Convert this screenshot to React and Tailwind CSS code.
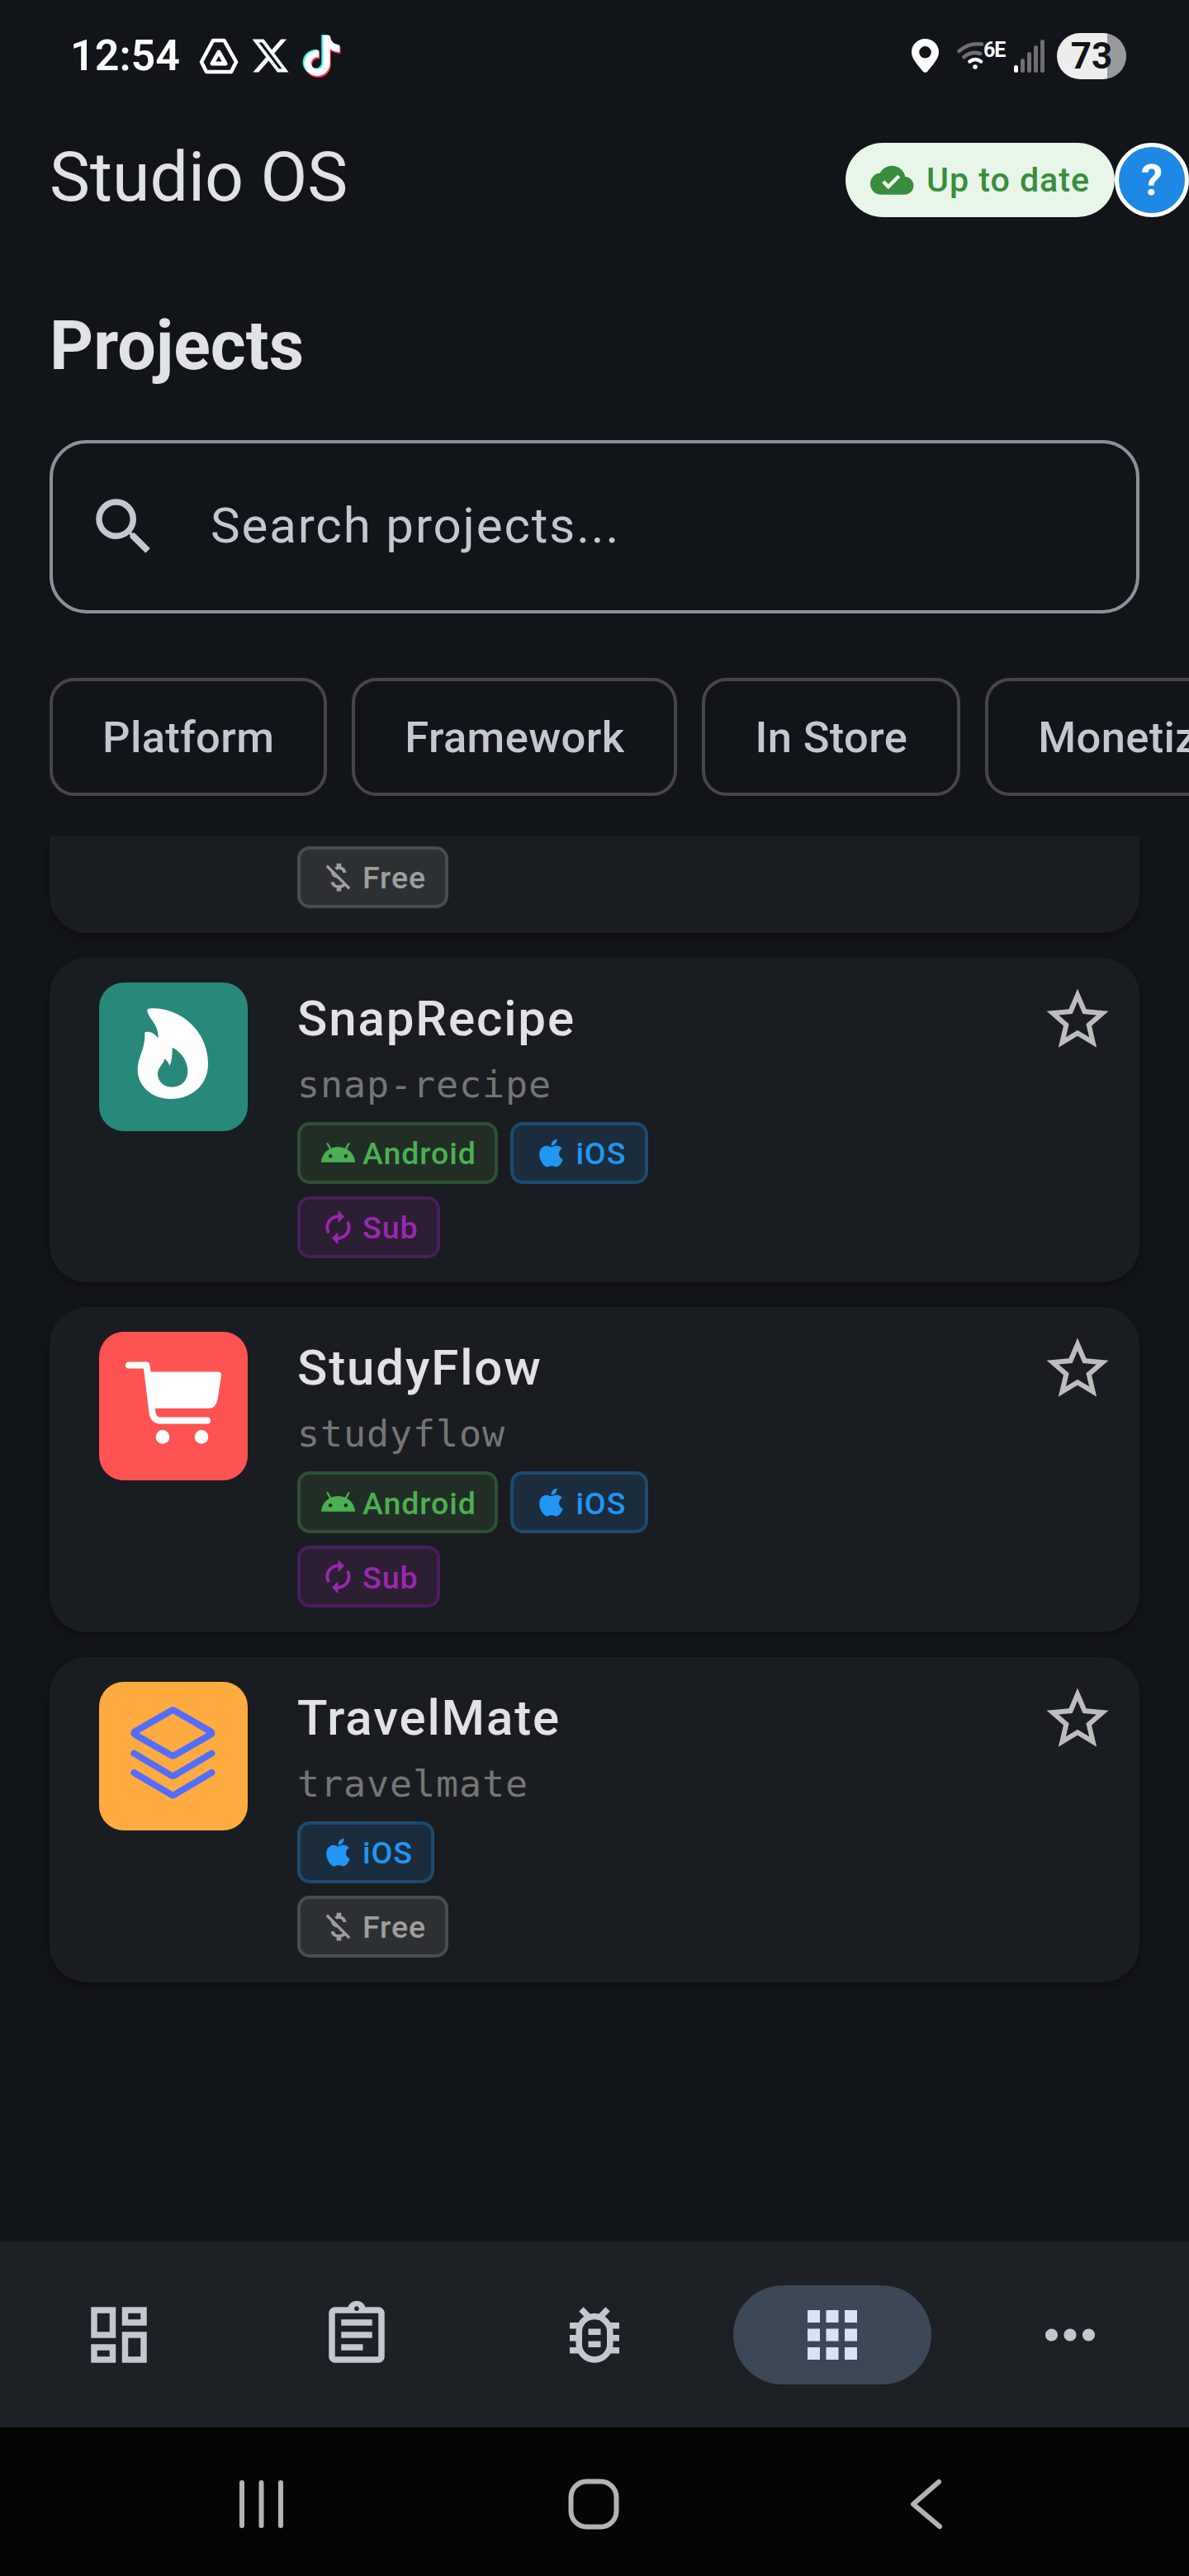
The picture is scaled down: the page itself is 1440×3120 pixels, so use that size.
import {
  MdOutlineDashboard,
  MdOutlineAssignment,
  MdOutlineBugReport,
  MdApps,
  MdMoreHoriz,
  MdSearch,
  MdCloudDone,
  MdStarBorder,
  MdAndroid,
  MdAutorenew,
  MdMoneyOff,
} from "react-icons/md";
import { FaXTwitter, FaTiktok } from "react-icons/fa6";

const FILTERS = ["Platform", "Framework", "In Store", "Monetization"];

const PROJECTS = [
  { name: "SnapRecipe", slug: "snap-recipe", icon: FlameIcon, tile: "bg-[#28887b]", platforms: ["android", "ios"], pricing: "sub" },
  { name: "StudyFlow", slug: "studyflow", icon: CartIcon, tile: "bg-[#ff5252]", platforms: ["android", "ios"], pricing: "sub" },
  { name: "TravelMate", slug: "travelmate", icon: LayersIcon, tile: "bg-[#ffab40]", platforms: ["ios"], pricing: "free" },
];

const BADGES = {
  android: { label: "Android", icon: MdAndroid, style: "bg-[#202e26] border-[#2c5132] text-[#4caf50]" },
  ios: { label: "iOS", icon: AppleIcon, style: "bg-[#1b2c3c] border-[#1c4a70] text-[#2196f3]" },
  sub: { label: "Sub", icon: MdAutorenew, style: "bg-[#2c1e33] border-[#49205a] text-[#9c27b0]" },
  free: { label: "Free", icon: MdMoneyOff, style: "bg-[#2d3032] border-[#4a4d4f] text-[#9e9e9e]" },
};

const TABS = [
  { id: "dashboard", icon: MdOutlineDashboard },
  { id: "tasks", icon: MdOutlineAssignment },
  { id: "bugs", icon: MdOutlineBugReport },
  { id: "projects", icon: MdApps, active: true },
  { id: "more", icon: MdMoreHoriz },
];

function AppleIcon({ className }) {
  return (
    <svg className={className} viewBox="0 0 24 24" fill="currentColor">
      <path d="M17.05 20.28c-.98.95-2.05.8-3.08.35-1.09-.46-2.09-.48-3.24 0-1.44.62-2.2.44-3.06-.35C2.79 15.25 3.51 7.59 9.05 7.31c1.35.07 2.29.74 3.08.8 1.18-.24 2.31-.93 3.57-.84 1.51.12 2.65.72 3.4 1.8-3.12 1.87-2.38 5.98.48 7.13-.57 1.5-1.31 2.99-2.53 4.08zM12.03 7.25c-.15-2.23 1.66-4.07 3.74-4.25.29 2.58-2.34 4.5-3.74 4.25z" />
    </svg>
  );
}

function FlameIcon() {
  return (
    <svg className="h-[180px] w-[180px]" viewBox="2 4 540 540">
      <path
        fill="#fff"
        fillRule="evenodd"
        d="M178 113C174 102 180 98 192 98C262 96 322 132 357 177C386 215 398 260 398 300C398 372 342 427 262 427C192 427 142 380 142 320C142 275 171 245 168 188Q168 183 173 183C191 182 206 190 216 206C222 165 188 140 178 113ZM268 240C300 256 324 290 324 325C324 362 300 384 266 384C236 384 215 362 215 337C215 312 236 302 240 281C250 289 254 296 258 306C266 294 268 268 268 240Z"
      />
    </svg>
  );
}

function CartIcon() {
  return (
    <svg className="h-[180px] w-[180px]" viewBox="0 0 180 180" fill="#fff">
      <path d="M36 40.500H57.500L64.500 98Q66 107.500 74 107.500H131" fill="none" stroke="#fff" strokeWidth="8" strokeLinecap="round" strokeLinejoin="round" />
      <path d="M59 48.500H144Q148.600 48.500 148 53L143.500 82Q141.500 92.700 133 92.700H64Z" />
      <circle cx="77" cy="127.400" r="8.300" />
      <circle cx="124" cy="127.400" r="8.300" />
    </svg>
  );
}

function LayersIcon() {
  return (
    <svg className="h-[180px] w-[180px]" viewBox="2 3 540 540" fill="none" stroke="#536dfe" strokeWidth="24" strokeLinejoin="round" strokeLinecap="round">
      <path d="M264 108Q270 104 276 108L408 184Q415 189 408 194L276 270Q270 274 264 270L132 194Q125 189 132 184Z" />
      <path d="M129 263L264 343Q270 347 276 343L411 263" />
      <path d="M129 333L264 413Q270 417 276 413L411 333" />
    </svg>
  );
}

function StatusBar() {
  return (
    <div className="flex h-[135px] shrink-0 items-center pl-[85px] pr-[76px]">
      <span className="w-[156px] text-[52px] font-semibold leading-none text-white">12:54</span>
      <svg className="h-[44px] w-[48px]" viewBox="0 0 48 44" fill="none" stroke="#fff" strokeLinejoin="round">
        <path strokeWidth="4.500" d="M17 3h13.500L45 29l-6 12H9L3 29Z" />
        <path strokeWidth="5" d="M24 17l-8 14h16Z" />
      </svg>
      <FaXTwitter className="ml-[14px] h-[49px] w-[49px] text-white" />
      <div className="relative ml-[14px] h-[52px] w-[48px]">
        <FaTiktok className="absolute left-0 top-0 h-[49px] w-[44px] text-[#25f4ee]" />
        <FaTiktok className="absolute left-[3px] top-[3px] h-[49px] w-[44px] text-[#fe2c55]" />
        <FaTiktok className="absolute left-[1.5px] top-[1.5px] h-[49px] w-[44px] text-white" />
      </div>
      <svg className="ml-auto h-[41px] w-[33px]" viewBox="0 0 33 41">
        <path fill="#fff" fillRule="evenodd" d="M16.500 0C7.400 0 0 7 0 16.200C0 24 7 31 13.500 39.300Q16.500 42.500 19.500 39.300C26 31 33 24 33 16.200C33 7 25.600 0 16.500 0ZM16.500 9a7.300 7.300 0 1 1 0 14.600a7.300 7.300 0 0 1 0-14.600Z" />
      </svg>
      <div className="ml-[22px] flex w-[57px]">
        <svg className="h-[40px] w-[32px] shrink-0" viewBox="0 0 32 40" fill="none" strokeWidth="4.500" strokeLinecap="round">
          <path stroke="#6d6f72" d="M2.500 14Q14 3.500 30 5.500M8.500 21Q17 13.500 28 17" />
          <path stroke="#fff" d="M15.500 26.500Q22 21.500 29 26.500" />
          <circle cx="22" cy="33" r="2.800" fill="#fff" />
        </svg>
        <span className="text-[25px] font-bold leading-[25px] tracking-[-1px] text-white">6E</span>
      </div>
      <div className="ml-[12px] flex h-[40px] items-end gap-[3px]">
        <span className="h-[9px] w-[5px] rounded-full bg-white" />
        <span className="h-[17px] w-[5px] rounded-full bg-[#6d6f72]" />
        <span className="h-[25px] w-[5px] rounded-full bg-[#6d6f72]" />
        <span className="h-[33px] w-[5px] rounded-full bg-[#6d6f72]" />
        <span className="h-[40px] w-[5px] rounded-full bg-[#6d6f72]" />
      </div>
      <div className="ml-[15px] flex h-[56px] w-[84px] items-center justify-center rounded-full bg-linear-to-r from-[#ededed] from-[73%] to-[#98999b] to-[73%]">
        <span className="text-[44px] font-bold leading-none text-[#111418]">73</span>
      </div>
    </div>
  );
}

function Header() {
  return (
    <header className="flex h-[166px] shrink-0 items-center pl-[60px]">
      <h1 className="pb-[7px] text-[82.5px] leading-[97px] text-[#e1e2e8]">Studio OS</h1>
      <div className="ml-auto flex h-[90px] items-center gap-[15px] rounded-full bg-[#e8f5e9] px-[30px] text-[#388e3c]">
        <MdCloudDone className="h-[52.5px] w-[52.5px]" />
        <span className="pt-[2px] text-[41.250px] font-medium leading-none tracking-[0.938px]">Up to date</span>
      </div>
      <button className="flex h-[90px] w-[90px] items-center justify-center rounded-full border-[5px] border-white bg-[#1e88e5] text-[52.5px] font-bold leading-none text-white">
        ?
      </button>
    </header>
  );
}

function Badge({ type }) {
  const { label, icon: Icon, style } = BADGES[type];
  return (
    <span className={`flex h-[75px] items-center gap-[7.5px] rounded-[15px] border-4 px-[22.5px] ${style}`}>
      <Icon className="h-[45px] w-[45px]" />
      <span className="pt-[3px] text-[37.5px] font-medium leading-none tracking-[0.938px]">{label}</span>
    </span>
  );
}

function ProjectCard({ project }) {
  const { name, slug, icon: Icon, tile, platforms, pricing } = project;
  return (
    <article className="flex h-[393.750px] items-start rounded-[45px] bg-[#191c20] py-[30px] pl-[60px] pr-[30px] shadow-[0_4px_8px_rgba(0,0,0,0.3)]">
      <div className={`flex h-[180px] w-[180px] shrink-0 items-center justify-center rounded-[30px] ${tile}`}>
        <Icon />
      </div>
      <div className="ml-[60px] flex flex-1 flex-col">
        <h3 className="h-[90px] text-[60px] font-medium leading-[88px] tracking-[1.875px] text-[#e1e2e8]">{name}</h3>
        <p className="h-[79px] font-['Droid_Sans_Mono','DejaVu_Sans_Mono',monospace] text-[45px] leading-[68px] tracking-[0.9px] text-[#757575]">{slug}</p>
        <div className="flex gap-[15px]">
          {platforms.map((p) => (
            <Badge key={p} type={p} />
          ))}
        </div>
        <div className="mt-[15px] flex">
          <Badge type={pricing} />
        </div>
      </div>
      <MdStarBorder className="h-[90px] w-[90px] shrink-0 text-[#bdbdbd]" />
    </article>
  );
}

function TabBar() {
  return (
    <nav className="flex h-[225px] shrink-0 items-center bg-[#1d2024]">
      {TABS.map(({ id, icon: Icon, active }) => (
        <div key={id} className="flex flex-1 justify-center">
          <div className={`flex h-[120px] w-[240px] items-center justify-center rounded-full ${active ? "bg-[#3c4858] text-[#d7e3f8]" : "text-[#c4c6d0]"}`}>
            <Icon className="h-[90px] w-[90px]" />
          </div>
        </div>
      ))}
    </nav>
  );
}

function SystemBar() {
  return (
    <div className="flex h-[180px] shrink-0 items-center bg-[#050505] pl-[286px] pr-[290px] pt-[5px]">
      <svg className="h-[62px] w-[62px]" viewBox="0 0 62 62" stroke="#b3b3b3" strokeWidth="6" strokeLinecap="round">
        <path d="M7 5v52M30.500 5v52M54 5v52" />
      </svg>
      <svg className="ml-[340px] h-[62px] w-[62px]" viewBox="0 0 62 62" fill="none" stroke="#b3b3b3" strokeWidth="6">
        <rect x="3.500" y="3.500" width="55" height="55" rx="19" />
      </svg>
      <svg className="ml-auto h-[62px] w-[48px]" viewBox="0 0 48 62" fill="none" stroke="#b3b3b3" strokeWidth="6" strokeLinecap="round" strokeLinejoin="round">
        <path d="M35 4L4 31l32 27" />
      </svg>
    </div>
  );
}

export default function App() {
  return (
    <div className="flex h-[3120px] w-[1440px] flex-col overflow-hidden bg-[#111418] font-['Roboto',sans-serif]">
      <StatusBar />
      <Header />
      <h2 className="h-[232px] shrink-0 pl-[60px] pt-[69px] text-[82.5px] font-bold leading-[97px] text-[#e1e2e8]">Projects</h2>
      <div className="mx-[60px] flex h-[210px] shrink-0 items-center rounded-[45px] border-4 border-[#8e9099] pl-[41px] text-[#c4c6d0]">
        <MdSearch className="h-[90px] w-[90px]" />
        <span className="ml-[60px] pb-[3px] text-[60px] leading-[70px] tracking-[1.875px]">Search projects...</span>
      </div>
      <div className="mt-[78px] flex h-[142.5px] shrink-0 gap-[30px] overflow-hidden pl-[60px]">
        {FILTERS.map((label) => (
          <button key={label} className="shrink-0 rounded-[30px] border-4 border-[#45474a] px-[60px] pt-[3px] text-[52.5px] font-medium tracking-[0.375px] text-[#c4c6d0]">
            {label}
          </button>
        ))}
      </div>
      <main className="mt-[49px] flex flex-1 flex-col gap-[30px] overflow-hidden px-[60px]">
        {/* tail of the card scrolled under the filters */}
        <article className="flex h-[117px] shrink-0 items-end rounded-b-[45px] bg-[#191c20] pb-[30px] pl-[300px] shadow-[0_4px_8px_rgba(0,0,0,0.3)]">
          <Badge type="free" />
        </article>
        {PROJECTS.map((project) => (
          <ProjectCard key={project.slug} project={project} />
        ))}
      </main>
      <TabBar />
      <SystemBar />
    </div>
  );
}
